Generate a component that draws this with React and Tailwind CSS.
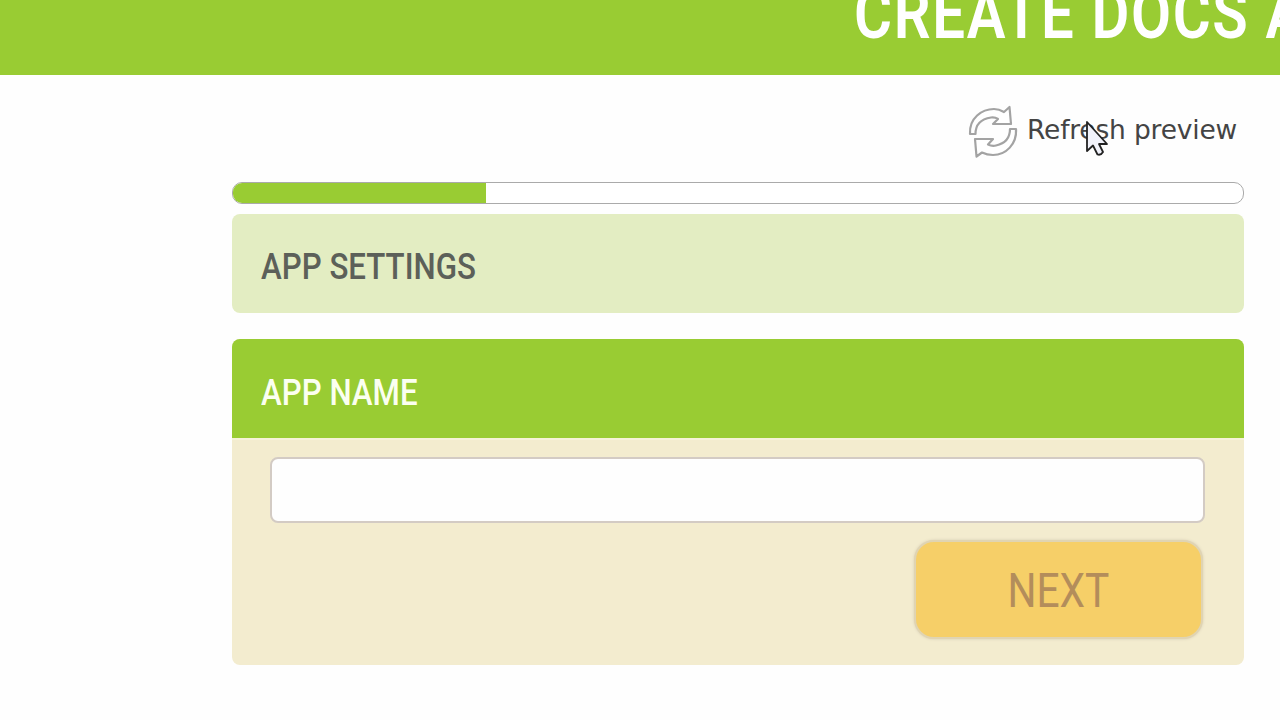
const DONE = 25

function RefreshIcon() {
  return (
    <svg width="50" height="54" viewBox="0 0 50 54" fill="#fff" stroke="#a3a3a3" strokeWidth="2.2" strokeLinejoin="round">
      <path d="M2 29C1 13 14 4 26 4Q31 4 36 7L41.500 2L43 19H25L30 14Q27 12 23 12.500C13 14 7.500 19 7.500 29Z" />
      <path d="M48 24C49 39 38 50 25 50Q19 50 14 47.500L8.500 51.500L7 34H25L20 39.500Q24 41.500 28 40.500C37 38.500 42 33 42 24Z" />
    </svg>
  )
}

function Pointer() {
  return (
    <svg className="absolute left-[58px] top-[15px]" width="24" height="38" viewBox="0 0 24 38" fill="#f1f2fa" stroke="#222" strokeWidth="1.8" strokeLinejoin="round">
      <path d="M2 2V31L8 25.500L12.500 34.500Q16 35.500 18 32L14 24H22Z" />
    </svg>
  )
}

export default function App() {
  return (
    <div className="h-[720px] w-[1280px] overflow-hidden bg-[#fefefe] font-['Roboto',sans-serif]">
      <header className="h-[75px] overflow-hidden bg-[#99cc33] pl-[854px]">
        <h1 className="-mt-[21px] w-max origin-left scale-x-[0.83] text-[70px] leading-[70px] font-semibold tracking-[2px] whitespace-nowrap text-white">
          CREATE DOCS A
        </h1>
      </header>

      <main className="ml-[232px] w-[1012px]">
        <div className="flex h-[107px] items-start justify-end pt-[30px] pr-[7px]">
          <div className="relative flex">
            <RefreshIcon />
            <span className="relative ml-[9px] w-[210px] text-[26.5px] leading-[49px] tracking-[-0.2px] whitespace-nowrap text-[#444] font-['DejaVu_Sans',sans-serif]">
              Refresh preview
              <Pointer />
            </span>
          </div>
        </div>

        <div className="h-[22px] overflow-hidden rounded-[10px] border border-[#aaa] bg-white">
          <div className="h-full bg-[#99cc33]" style={{ width: `${DONE}%` }} />
        </div>

        <section className="mt-[10px] flex h-[99px] items-center rounded-lg bg-[#e3edc2] pt-[7px] pl-[29px]">
          <h2 className="origin-left scale-x-[0.845] text-[37px] font-medium whitespace-nowrap text-[#5c6059]">APP SETTINGS</h2>
        </section>

        <section className="mt-[26px] overflow-hidden rounded-lg bg-[#f3eccf]">
          <div className="flex h-[99px] items-center bg-[#99cc33] pt-[8px] pl-[29px]">
            <h2 className="origin-left scale-x-[0.845] text-[37px] font-medium whitespace-nowrap text-[#fbfff0]">APP NAME</h2>
          </div>
          <div className="flex h-[227px] flex-col items-end border-t-2 border-[#f6f3d7] pt-[17px] pr-[39px] pl-[38px]">
            <input className="h-[66px] w-full rounded-lg border-2 border-[#d3cbc4] bg-[#fefefe] outline-none" />
            <button className="mt-[17px] mr-[2px] flex h-[99px] w-[289px] items-center justify-center rounded-[20px] border-2 border-[#e0d4b2] bg-[#f6cf68] pt-[3px] text-[49px] text-[#b38d5b] shadow-[0_0_3px_#d5ccb4]">
              <span className="scale-x-[0.83]">NEXT</span>
            </button>
          </div>
        </section>
      </main>
    </div>
  )
}
